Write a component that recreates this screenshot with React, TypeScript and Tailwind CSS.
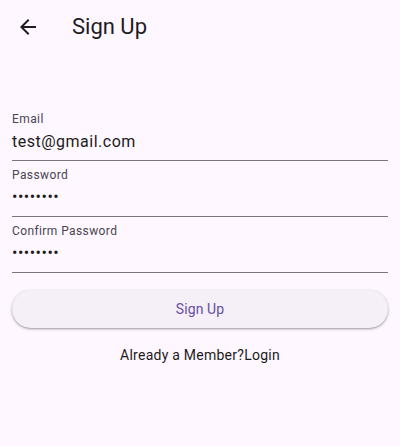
import React from "react"

const FONT = { fontFamily: "Roboto, 'Noto Sans', sans-serif" }

function BackArrow() {
  return (
    <svg width="24" height="24" viewBox="0 0 24 24" fill="#1D1B20">
      <path d="M20 11H7.83l5.59-5.59L12 4l-8 8 8 8 1.41-1.41L7.83 13H20v-2z" />
    </svg>
  )
}

function Field({ label, value, secret }: { label: string; value: string; secret?: boolean }) {
  return (
    <div className="h-[56px] flex flex-col border-b border-[#79747E] pt-[6px]">
      <div className="text-[12px] leading-[16px] text-[#49454F] tracking-[0.4px]">{label}</div>
      <div
        className={
          secret
            ? "text-[16px] leading-[24px] text-[#1D1B20] mt-[2px] tracking-[0.5px]"
            : "text-[16px] leading-[24px] text-[#1D1B20] mt-[3px] tracking-[0.5px]"
        }
      >
        {secret ? "••••••••" : value}
      </div>
    </div>
  )
}

export default function App() {
  return (
    <div className="w-[400px] h-[446px] bg-[#FEF7FF]" style={FONT}>
      {/* App bar */}
      <div className="h-[56px] flex items-center">
        <div className="w-[56px] flex justify-center -mt-[2px]">
          <BackArrow />
        </div>
        <div className="ml-[16px] text-[22px] leading-[28px] text-[#1D1B20] -mt-[2px]">Sign Up</div>
      </div>

      <div className="px-[12px] pt-[49px]">
        <Field label="Email" value="test@gmail.com" />
        <Field label="Password" value="password" secret />
        <Field label="Confirm Password" value="password" secret />

        <button className="mt-[17px] w-full h-[38px] rounded-full bg-[#F5EFF7] text-[#6750A4] text-[14px] tracking-[0.1px] shadow-[0_1px_2px_rgba(0,0,0,0.3),0_1px_3px_1px_rgba(0,0,0,0.08)]">
          Sign Up
        </button>

        <div className="mt-[17px] text-center text-[14px] leading-[20px] text-[#1D1B20] tracking-[0.25px]">
          Already a Member?Login
        </div>
      </div>
    </div>
  )
}
